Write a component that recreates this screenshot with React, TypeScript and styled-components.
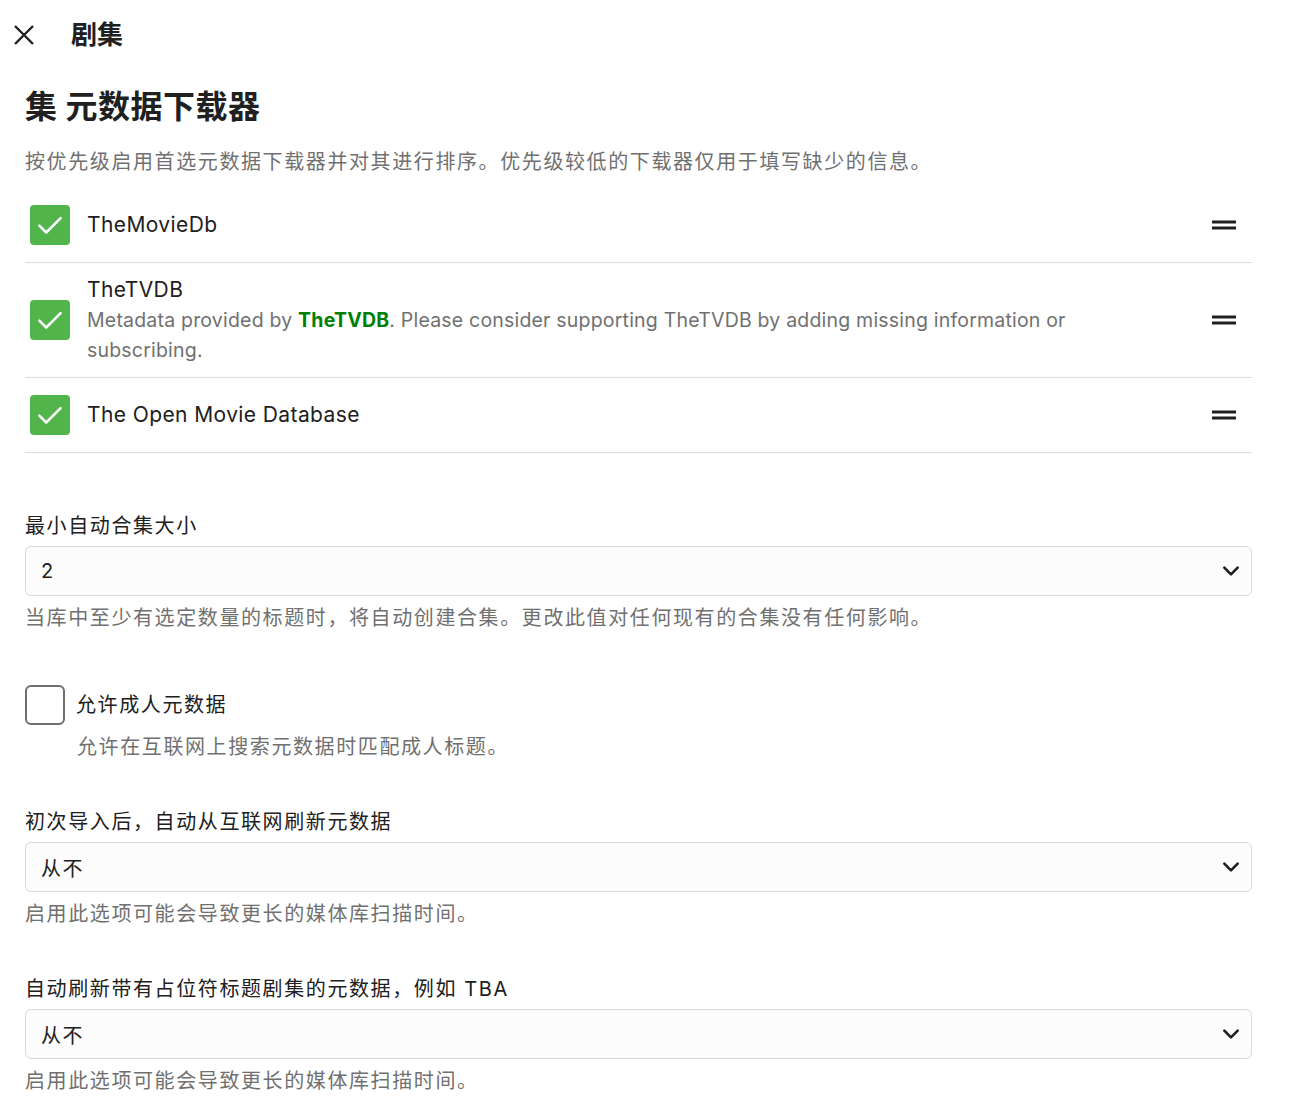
import React from "react";
import styled, { createGlobalStyle } from "styled-components";

const Global = createGlobalStyle`
  html, body { margin: 0; padding: 0; background: #fff; }
  body {
    font-family: Inter, "Noto Sans CJK SC", "Noto Sans", sans-serif;
    color: #202020;
    -webkit-font-smoothing: antialiased;
  }
`;

const Header = styled.header`
  height: 70px;
  display: flex;
  align-items: center;
  padding-left: 12px;
  gap: 35px;
`;

const IconButton = styled.button`
  border: 0;
  background: none;
  padding: 0;
  width: 24px;
  height: 24px;
  display: flex;
  align-items: center;
  justify-content: center;
  color: #202020;
  cursor: pointer;
`;

const PageTitle = styled.h1`
  margin: 0;
  font-size: 26px;
  font-weight: 700;
  line-height: 1;
`;

const Content = styled.main`
  padding: 0 51px 40px 25px;
`;

const SectionTitle = styled.h2`
  margin: 18px 0 0;
  font-size: 32px;
  font-weight: 700;
  line-height: 38px;
  letter-spacing: 0.5px;
`;

const Description = styled.p`
  margin: 21px 0 0;
  font-size: 20px;
  line-height: 30px;
  color: #707070;
  letter-spacing: 1.6px;
`;

const List = styled.div`
  margin-top: 11px;
`;

const Row = styled.div`
  display: flex;
  align-items: center;
  padding: 12px 0;
  min-height: 50px;
  border-bottom: 1px solid #dcdcdc;
`;

const CheckSlot = styled.div`
  width: 57px;
  display: flex;
  align-items: center;
  padding-left: 5px;
  flex-shrink: 0;
`;

const CheckBox = styled.span<{ $checked?: boolean }>`
  width: 40px;
  height: 40px;
  box-sizing: border-box;
  border-radius: ${(p) => (p.$checked ? "4px" : "6px")};
  background: ${(p) => (p.$checked ? "#52b54b" : "#fff")};
  border: ${(p) => (p.$checked ? "none" : "2px solid #6e6e6e")};
  display: flex;
  align-items: center;
  justify-content: center;
  flex-shrink: 0;
`;

const RowBody = styled.div`
  flex: 1;
  display: flex;
  flex-direction: column;
  justify-content: center;
`;

const RowName = styled.div`
  font-size: 21px;
  line-height: 30px;
  letter-spacing: 0.4px;
`;

const RowDesc = styled.div`
  font-size: 19.5px;
  line-height: 30px;
  color: #707070;
  letter-spacing: 0.2px;
  padding-right: 120px;
`;

const Link = styled.a`
  color: #008000;
  font-weight: 700;
  text-decoration: none;
`;

const DragHandle = styled.div`
  width: 36px;
  height: 36px;
  margin-right: 10px;
  display: flex;
  align-items: center;
  justify-content: center;
  color: #202020;
`;

const Field = styled.div<{ $top: number }>`
  margin-top: ${(p) => p.$top}px;
`;

const Label = styled.label`
  display: block;
  font-size: 20px;
  line-height: 30px;
  letter-spacing: 1.6px;
`;

const SelectBox = styled.div`
  margin-top: 5px;
  height: 50px;
  box-sizing: border-box;
  border: 1px solid #d9d9d9;
  border-radius: 6px;
  background: #fcfcfc;
  display: flex;
  align-items: center;
  justify-content: space-between;
  padding: 0 10px 0 15px;
  font-size: 20px;
  letter-spacing: 1.6px;
`;

const Help = styled.div<{ $indent?: number }>`
  margin-top: 7px;
  font-size: 20px;
  line-height: 30px;
  color: #707070;
  letter-spacing: 1.6px;
  padding-left: ${(p) => p.$indent ?? 0}px;
`;

const CheckField = styled.div`
  margin-top: 52px;
`;

const CheckLine = styled.label`
  display: flex;
  align-items: center;
  gap: 11px;
  font-size: 20px;
  line-height: 40px;
  letter-spacing: 1.6px;
`;

const Check = () => (
  <svg width="30" height="30" viewBox="0 0 24 24" fill="none">
    <path d="M3.5 12.5l5.5 5.5L20.5 6.5" stroke="#fff" strokeWidth="2" strokeLinecap="round" strokeLinejoin="round" />
  </svg>
);

const Drag = () => (
  <svg width="36" height="36" viewBox="0 0 24 24" fill="currentColor">
    <path d="M20 9H4v2h16V9zM4 15h16v-2H4v2z" />
  </svg>
);

const Chevron = () => (
  <svg width="20" height="20" viewBox="0 0 24 24" fill="none">
    <path d="M4 8l8 8 8-8" stroke="#202020" strokeWidth="3.2" strokeLinecap="round" strokeLinejoin="round" />
  </svg>
);

const Close = () => (
  <svg width="24" height="24" viewBox="0 0 24 24" fill="none">
    <path d="M3 3l18 18M21 3L3 21" stroke="#202020" strokeWidth="2.4" />
  </svg>
);

const fetchers = [
  { name: "TheMovieDb" },
  { name: "TheTVDB", tvdb: true },
  { name: "The Open Movie Database" },
];

const selects = [
  {
    label: "初次导入后，自动从互联网刷新元数据",
    value: "从不",
    help: "启用此选项可能会导致更长的媒体库扫描时间。",
  },
  {
    label: "自动刷新带有占位符标题剧集的元数据，例如 TBA",
    value: "从不",
    help: "启用此选项可能会导致更长的媒体库扫描时间。",
  },
];

export default function App() {
  return (
    <>
      <Global />
      <Header>
        <IconButton aria-label="close">
          <Close />
        </IconButton>
        <PageTitle>剧集</PageTitle>
      </Header>
      <Content>
        <SectionTitle>集 元数据下载器</SectionTitle>
        <Description>按优先级启用首选元数据下载器并对其进行排序。优先级较低的下载器仅用于填写缺少的信息。</Description>
        <List>
          {fetchers.map((f) => (
            <Row key={f.name}>
              <CheckSlot>
                <CheckBox $checked>
                  <Check />
                </CheckBox>
              </CheckSlot>
              <RowBody>
                <RowName>{f.name}</RowName>
                {f.tvdb && (
                  <RowDesc>
                    Metadata provided by <Link href="#">TheTVDB</Link>. Please consider supporting TheTVDB by adding missing information or subscribing.
                  </RowDesc>
                )}
              </RowBody>
              <DragHandle>
                <Drag />
              </DragHandle>
            </Row>
          ))}
        </List>

        <Field $top={58}>
          <Label>最小自动合集大小</Label>
          <SelectBox>
            <span>2</span>
            <Chevron />
          </SelectBox>
          <Help>当库中至少有选定数量的标题时，将自动创建合集。更改此值对任何现有的合集没有任何影响。</Help>
        </Field>

        <CheckField>
          <CheckLine>
            <CheckBox />
            <span>允许成人元数据</span>
          </CheckLine>
          <Help $indent={52}>允许在互联网上搜索元数据时匹配成人标题。</Help>
        </CheckField>

        {selects.map((s, i) => (
          <Field key={i} $top={45}>
            <Label>{s.label}</Label>
            <SelectBox>
              <span>{s.value}</span>
              <Chevron />
            </SelectBox>
            <Help>{s.help}</Help>
          </Field>
        ))}
      </Content>
    </>
  );
}
